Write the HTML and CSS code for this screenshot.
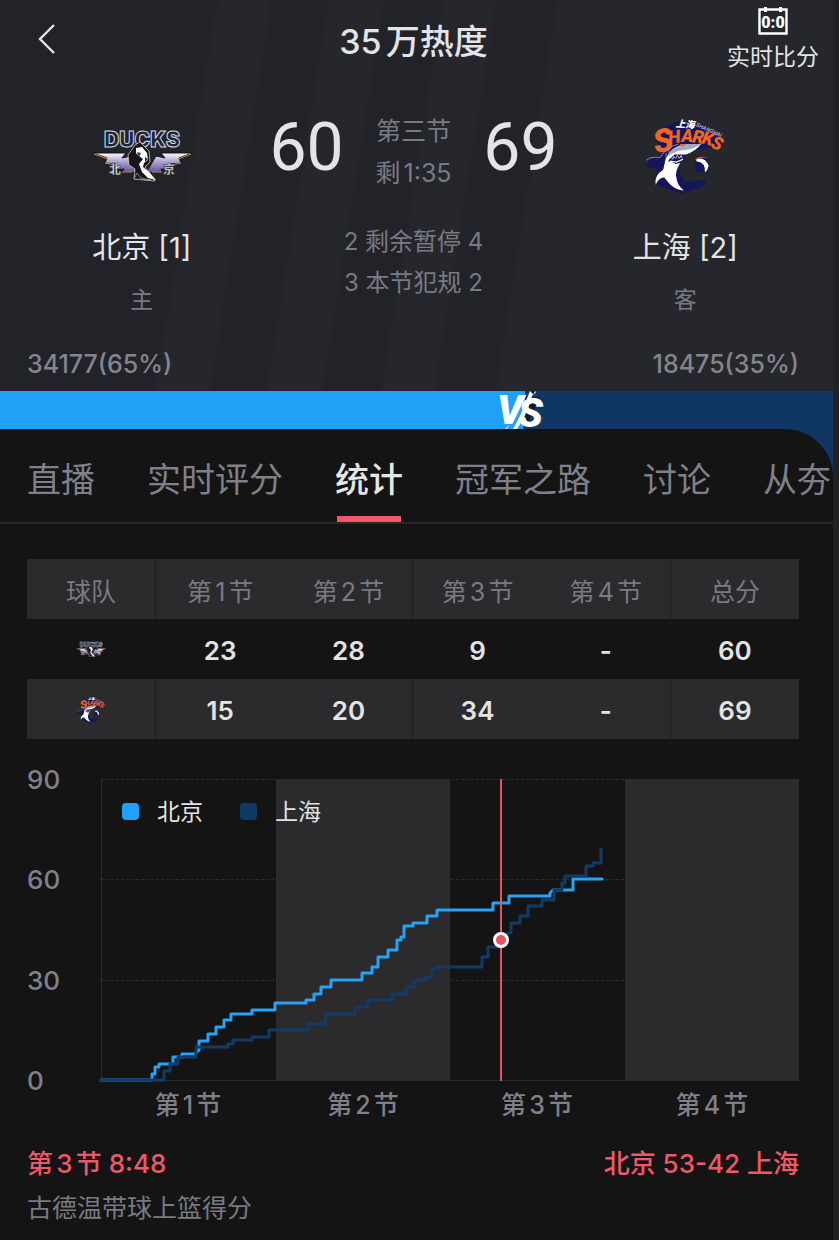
FILE: index.html
```html
<!DOCTYPE html>
<html lang="zh-CN">
<head>
    <meta charset="UTF-8">
    <meta name="viewport" content="width=device-width, initial-scale=1.0">
    <title>北京 - 上海</title>
    <link rel="stylesheet" href="styles.css">
</head>
<body>
    <!-- team logos, used in the scoreboard and in the table -->
    <svg class="defs" width="0" height="0">
        <defs>
            <linearGradient id="wing" x1="0" y1="0" x2="0" y2="1">
                <stop offset="0" stop-color="#ffffff"/>
                <stop offset="0.35" stop-color="#b9b1d8"/>
                <stop offset="1" stop-color="#5a4a9c"/>
            </linearGradient>
        </defs>
        <symbol id="ducks" viewBox="0 0 120 80">
            <path d="M11 38 H44 L40 43 L49 41 L55 58 L40 57 L42 54 L31 55 L33 49 L23 48 L25 43 Z" fill="url(#wing)" stroke="#15131c" stroke-width="1"/>
            <path d="M110 38 H79 L83 43 L74 41 L64 58 L80 57 L79 54 L90 55 L88 49 L99 48 L97 43 Z" fill="url(#wing)" stroke="#15131c" stroke-width="1"/>
            <path d="M12 39 L26 44 M23 48 L33 50 M40 57 H50 M109 39 L96 44 M99 48 L89 50 M70 57 H80" stroke="#c79a35" stroke-width="1" fill="none"/>
            <text x="60" y="32" text-anchor="middle" class="ducks-word">DUCKS</text>
            <path d="M53 30 L58 27 L62 31 L67 36 L68 47 L63 52 L73 66 L52 64 L53 54 L47 50 L46 40 Z" fill="#17161d" stroke="#d8c6ad" stroke-width="0.8"/>
            <path d="M54 33 L60 32 L65 38 L66 45 L62 48 L61 52 L68 58 L74 65 L66 63 L60 57 L57 49 L61 44 L57 41 L54 38 Z" fill="#fff"/>
            <path d="M55 37 L59 38 L57 42 Z M63 42 L66 44 L63 47 Z" fill="#123f61"/>
            <path d="M52 64 L55 58 L59 63 L69 65 Z" fill="#1a1920" stroke="#cbb79d" stroke-width="0.6"/>
            <text x="33" y="59" text-anchor="middle" class="ducks-city">北</text>
            <text x="87" y="59" text-anchor="middle" class="ducks-city">京</text>
        </symbol>
        <symbol id="sharks" viewBox="0 0 110 95">
            <path d="M24 28 L34 18 L46 13 L72 14 L92 28 L91 38 L82 40 L72 41 L60 46 L50 52 L48 62 L54 76 L78 74 L73 81 L52 88 L40 85 L24 78 L25 62 L14 60 L17 53 L30 48 Z" fill="#14165a"/>
            <path d="M66 52 L78 50 L80 60 L76 66 L66 66 Z" fill="#14165a"/>
            <text x="45" y="18" class="sharks-city" transform="rotate(4 45 18)">上海</text>
            <text x="66" y="17" class="sharks-en" transform="rotate(24 66 17)">SHANGHAI</text>
            <text x="24" y="46" class="sharks-word big" transform="rotate(-12 24 46)">S</text>
            <text x="38" y="36" class="sharks-word" transform="rotate(-8 38 36)">H</text>
            <text x="51" y="34" class="sharks-word">A</text>
            <text x="62" y="34" class="sharks-word" transform="rotate(8 62 34)">R</text>
            <text x="72" y="35" class="sharks-word" transform="rotate(14 72 35)">K</text>
            <text x="81" y="39" class="sharks-word" transform="rotate(22 81 39)">S</text>
            <!-- body, snout, mouth -->
            <path d="M35 50 L45 57 L50 56 Q44 65 46 72 Q47 80 54 85 Q43 84 37 76 L33 71 Q27 72 24 79 Q22 69 32 63 Z" fill="#fff"/>
            <path d="M72 36 Q66 44 56 47 L44 47 L34 56 Q36 43 48 38 L58 36 Z" fill="#fff"/>
            <path d="M72 36 L58 36 Q43 38 37 48 L48 43 Q62 43 72 36 Z" fill="#a3aabb"/>
            <path d="M37 54 Q41 48 53 48 L54 53 L45 56 Z" fill="#14165a"/>
            <path d="M40 50 L42 52 L43 49 L45 51 L47 48 L49 51 L51 48 L52 51" stroke="#fff" stroke-width="0.8" fill="none"/>
            <path d="M39 54 L46 55 L53 52" stroke="#fff" stroke-width="1.4" fill="none"/>
            <path d="M35 45 V50 M38 43 V48 M14 53 Q19 49 24 50 L29 50 Q35 39 48 36" stroke="#7f8dbd" stroke-width="1" fill="none"/>
            <path d="M67 52 Q76 49 80 59 Q79 63 76 66 Q77 55 67 54 Z" fill="#fff"/>
            <path d="M65 52 Q73 47 80 51 Q73 49 68 52 Z" fill="#f26422"/>
            <path d="M49 36 L55 36 L53 39 Z" fill="#f26422"/>
        </symbol>
    </svg>

    <div class="app">
        <header class="hero">
            <div class="topbar">
                <button class="back" type="button" aria-label="返回">
                    <svg width="18" height="32" viewBox="0 0 18 32"><path d="M16 2 L2 16 L16 30" fill="none" stroke="#e3e3e8" stroke-width="2.4"/></svg>
                </button>
                <h1 class="title">35万热度</h1>
                <button class="live" type="button">
                    <svg width="30" height="30" viewBox="0 0 30 30">
                        <path d="M1.5 3.5 H28.5 V27.5 H1.5 Z" fill="none" stroke="#fff" stroke-width="2.4"/>
                        <path d="M7.500 1 V6 M22.500 1 V6" stroke="#fff" stroke-width="3"/>
                        <text x="15" y="22" text-anchor="middle" class="live-digits">0:0</text>
                    </svg>
                    <span>实时比分</span>
                </button>
            </div>

            <div class="board">
                <div class="team">
                    <svg class="logo" width="120" height="80" role="img" aria-label="北京"><use href="#ducks"/></svg>
                    <div class="name">北京 [1]</div>
                    <div class="role">主</div>
                </div>
                <div class="center">
                    <div class="score">
                        <span class="points">60</span>
                        <div class="clock">第三节<br>剩1:35</div>
                        <span class="points">69</span>
                    </div>
                    <div class="fouls">2 剩余暂停 4<br>3 本节犯规 2</div>
                </div>
                <div class="team">
                    <svg class="logo" width="110" height="95" role="img" aria-label="上海"><use href="#sharks"/></svg>
                    <div class="name">上海 [2]</div>
                    <div class="role">客</div>
                </div>
            </div>

            <div class="votes">
                <span>34177(65%)</span>
                <span>18475(35%)</span>
            </div>
        </header>

        <div class="lower">
            <div class="support">
                <div class="home-share" style="width: 63%">
                    <svg class="vs" width="56" height="38" viewBox="0 0 56 38">
                        <path d="M34 0 H56 V38 H28 Z" fill="#0f3761"/>
                        <path d="M31 10 L36 0 H40 L37 9 L45 5 L34 30 L25 33 Z" fill="#16191f"/>
                        <text x="2" y="33" class="vs-letter">V</text>
                        <text x="23" y="36" class="vs-letter">S</text>
                        <path d="M35 0 L25 25 L18 38 L22 38 L29 27 L38 3 Z M40 0 L38 5 L41 1 Z M14 34 L12 38 L10 38 Z" fill="#fff"/>
                    </svg>
                </div>
            </div>

            <main class="panel">
                <nav class="tabs">
                    <button type="button">直播</button>
                    <button type="button">实时评分</button>
                    <button type="button" class="active">统计</button>
                    <button type="button">冠军之路</button>
                    <button type="button">讨论</button>
                    <button type="button">从夯</button>
                </nav>

                <section class="stats">
                    <table class="quarters">
                        <thead>
                            <tr><th>球队</th><th>第1节</th><th>第2节</th><th>第3节</th><th>第4节</th><th>总分</th></tr>
                        </thead>
                        <tbody>
                            <tr>
                                <td><svg class="mini" width="36" height="24" role="img" aria-label="北京"><use href="#ducks"/></svg></td>
                                <td>23</td><td>28</td><td>9</td><td>-</td><td>60</td>
                            </tr>
                            <tr>
                                <td><svg class="mini" width="36" height="31" role="img" aria-label="上海"><use href="#sharks"/></svg></td>
                                <td>15</td><td>20</td><td>34</td><td>-</td><td>69</td>
                            </tr>
                        </tbody>
                    </table>

                    <svg class="chart" viewBox="0 0 772 352">
                        <!-- grid -->
                        <path class="dash" d="M74 9.5 H772 M74 109.5 H772 M74 210.5 H772"/>
                        <rect class="band" x="249" y="9" width="174" height="301"/>
                        <rect class="band" x="598" y="9" width="174" height="301"/>
                        <path class="axis" d="M74.5 9 V310.5 H772"/>

                        <text class="tick" x="0" y="19">90</text>
                        <text class="tick" x="0" y="119">60</text>
                        <text class="tick" x="0" y="220">30</text>
                        <text class="tick" x="0" y="320">0</text>

                        <text class="quarter" x="161" y="344">第1节</text>
                        <text class="quarter" x="336" y="344">第2节</text>
                        <text class="quarter" x="510" y="344">第3节</text>
                        <text class="quarter" x="685" y="344">第4节</text>

                        <rect x="95" y="33" width="17" height="17" rx="4" fill="#1fa0fa"/>
                        <text class="legend" x="130" y="50">北京</text>
                        <rect x="213" y="33" width="17" height="17" rx="4" fill="#103964"/>
                        <text class="legend" x="248" y="50">上海</text>

                        <!-- score lines -->
                        <path class="line home" d="M74 310 H125 V304 H128 V297 H132 V294 H146 V287 H155 V284 H168 L172 280 V271 H181 V264 H189 V257 H197 V250 H204 V244 H225 V240 H248 V233 H279 V230 H287 V224 H294 V217 H304 V210 H335 V203 H345 V197 H351 V187 H361 V180 H370 V170 H374 V167 H377 V156 H386 V153 H400 V146 H410 V140 H466 V133 H482 V126 H523 V123 L526 120 H546 V109 H575"/>
                        <path class="line away" d="M73 310 H137 V301 H143 V294 H151 V287 H169 V277 H201 V274 H206 V270 H225 V267 H242 V260 H281 V254 H298 V244 H328 V237 H341 V230 H365 V224 H379 V217 H387 V210 H398 V207 H405 V200 L411 197 H455 V187 H461 V177 H474 V170 L481 163 H484 V153 H493 V146 H501 V136 H515 V130 H527 V120 H535 V113 H538 V106 H559 V96 H566 V93 H574 V79"/>

                        <path class="cursor" d="M474 9 V311"/>
                        <circle cx="474" cy="170" r="6.5" fill="#f0505f" stroke="#fff" stroke-width="3"/>
                    </svg>

                    <div class="moment">
                        <span>第3节 8:48</span>
                        <span>北京 53-42 上海</span>
                    </div>
                    <p class="event">古德温带球上篮得分</p>
                </section>
            </main>
        </div>
    </div>
</body>
</html>
```

FILE: styles.css
```css
* { box-sizing: border-box; }
body {
    margin: 0;
    padding-right: 6px;
    background: #222222;
    color: #e3e3e8;
    font-family: Inter, "Noto Sans CJK SC", sans-serif;
    text-autospace: normal;
}
button { padding: 0; border: 0; background: none; color: inherit; font: inherit; white-space: nowrap; }
svg { display: block; }
.defs { position: absolute; }
.app { display: flex; flex-direction: column; min-height: 100vh; overflow: hidden; }

/* header */
.hero {
    padding: 6px 6px 12px 0;
    background: linear-gradient(99deg, #222328 210px, #26272c 220px 266px, #222328 270px 323px, #26272c 327px 377px, #222328 381px 436px, #26272c 440px 488px, #222329 492px 548px, #26272c 554px);
}
.topbar { display: grid; grid-template-columns: 1fr auto 1fr; align-items: start; height: 104px; padding: 0 8px; }
.back { justify-self: start; padding: 17px 30px 0; }
.title { margin: 0; padding-top: 12px; font-size: 34px; line-height: 48px; font-weight: 500; }
.live { display: flex; flex-direction: column; align-items: center; justify-self: end; font-size: 23px; line-height: 42px; }
.live-digits { font: 900 16px Roboto, sans-serif; fill: #fff; }

.board { display: grid; grid-template-columns: 1fr 292px 1fr; padding: 0 16px; }
.team { display: flex; flex-direction: column; align-items: center; }
.logo { height: 90px; }
.name { margin-top: 26px; font-size: 29px; line-height: 44px; }
.role { margin-top: 14px; font-size: 23px; line-height: 32px; color: #797a84; }
.score { display: flex; justify-content: space-between; height: 82px; padding: 0 2px; }
.points { font: 400 66px/76px Roboto, sans-serif; }
.clock { font-size: 25px; line-height: 42px; text-align: center; color: #797a84; }
.fouls { margin-top: 29px; font-size: 24px; line-height: 41px; text-align: center; color: #797a84; }
.votes { display: flex; justify-content: space-between; margin-top: 33px; padding: 0 28px 0 27px; font-size: 25px; line-height: 30px; font-weight: 500; color: #85858f; }

/* support bar, its right colour shows round the panel corner */
.lower { display: flex; flex: 1; flex-direction: column; background: #0f3761; }
.support { height: 38px; }
.home-share { position: relative; height: 38px; background: #1fa1f8; }
.vs { position: absolute; right: -26px; top: 0; }
.vs-letter { font: italic 900 41px Roboto, sans-serif; fill: #fff; }
.panel { flex: 1; min-width: 0; background: #141414; border-radius: 0 48px 0 0; }

.tabs { display: flex; gap: 52px; height: 95px; padding-left: 27px; border-bottom: 2px solid #29292b; overflow: hidden; }
.tabs button { flex: none; position: relative; padding-top: 8px; font-size: 34px; line-height: 84px; color: #80808b; }
.tabs .active { font-weight: 500; color: #e6e6e6; }
.tabs .active::after { content: ""; position: absolute; left: 2px; right: 2px; bottom: 0; height: 6px; background: #f0586a; }

.stats { padding: 35px 34px 12px 27px; }
.quarters { width: 100%; table-layout: fixed; border-collapse: collapse; text-align: center; }
.quarters th, .quarters td { height: 60px; padding: 0; }
.quarters th { padding-top: 2px; font-size: 25px; font-weight: 400; color: #797a84; }
.quarters td { padding-top: 3px; font-size: 26px; font-weight: 600; color: #e3e3e3; }
.quarters td:first-child { padding-top: 0; }
.quarters thead tr, .quarters tbody tr:nth-child(2) { background: #2b2b2d; }
.quarters th:nth-child(odd), .quarters td:nth-child(odd), .quarters th:nth-child(5), .quarters td:nth-child(5) { border-right: 1px solid #1e1e1f; }
.quarters tbody tr:first-child td { border-color: #141414; }
.mini { margin: 0 auto; }

/* chart */
.chart { width: 100%; margin-top: 31px; }
.band { fill: #2b2b2d; }
.dash { stroke: #2b2b2d; stroke-dasharray: 3 2; }
.axis { fill: none; stroke: #2b2b2d; }
.tick { font-size: 26px; font-weight: 500; fill: #80808b; }
.quarter { font-size: 25px; font-weight: 500; fill: #80808b; text-anchor: middle; }
.legend { font-size: 23px; fill: #e3e3e3; }
.line { fill: none; stroke-width: 3; stroke-linecap: round; stroke-linejoin: round; }
.home { stroke: #26a2f6; }
.away { stroke: #123a66; }
.cursor { stroke: #e25562; stroke-width: 2; }

.moment { display: flex; justify-content: space-between; margin-top: 22px; font-size: 26px; line-height: 40px; font-weight: 500; color: #f0586a; }
.event { margin: 3px 0 0; font-size: 25px; line-height: 42px; color: #797a84; }

/* logos */
.ducks-word { font: 900 21px Inter, sans-serif; fill: #1d2536; stroke: #d5d8e0; stroke-width: 1; }
.ducks-city { font: 900 12px "Noto Sans CJK SC", sans-serif; fill: #dfe3e8; stroke: #20242c; stroke-width: 0.5; }
.sharks-city { font: italic 900 10px "Noto Sans CJK SC", sans-serif; fill: #fff; }
.sharks-en { font: italic 500 6px Roboto, sans-serif; fill: #b9bfd8; }
.sharks-word { font: italic 900 19px Roboto, sans-serif; fill: #f26422; }
.sharks-word.big { font-size: 34px; }
```
